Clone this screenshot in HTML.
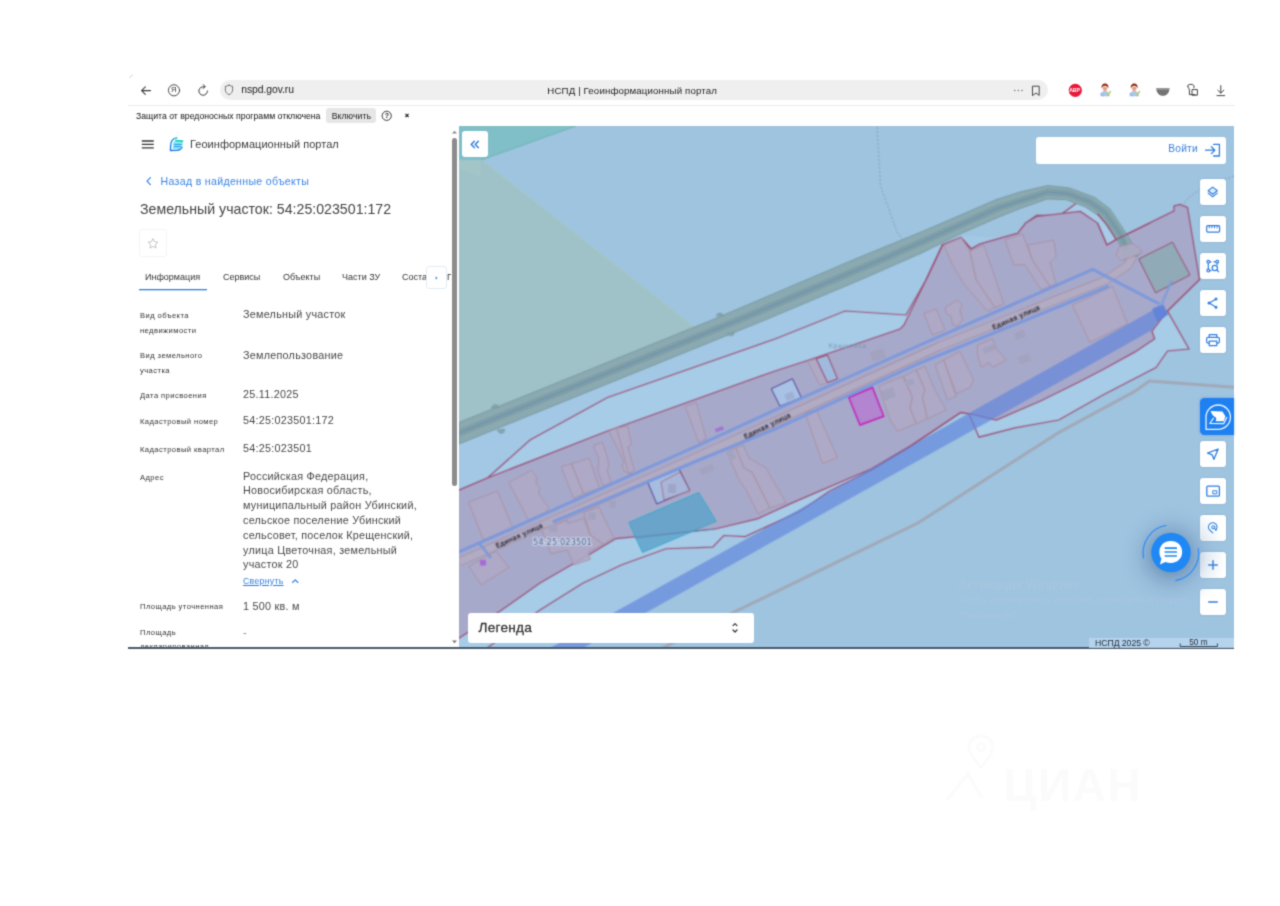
<!DOCTYPE html>
<html lang="ru">
<head>
<meta charset="utf-8">
<title>НСПД | Геоинформационный портал</title>
<style>
*{box-sizing:border-box;margin:0;padding:0}
html,body{width:1280px;height:906px;background:#fff;overflow:hidden}
body{position:relative;font-family:"Liberation Sans",sans-serif;color:#444;filter:url(#soft)}
.a{position:absolute;white-space:nowrap}
.t{position:absolute;white-space:nowrap;line-height:1}
/* browser chrome */
#url{left:220px;top:80px;width:828px;height:20px;background:#efefef;border-radius:10px}
#sep{left:128px;top:105px;width:1107px;height:1px;background:#ececec}
#incl{left:326px;top:108px;width:50px;height:15px;background:#e6e6e6;border-radius:3px}
/* left panel */
#sb{left:452px;top:138px;width:5px;height:348px;background:#8c8c8c;border-radius:3px}
.lab{font-size:7.6px;color:#333;left:140px;letter-spacing:0.43px}
.val{font-size:10.8px;color:#484848;left:243px;letter-spacing:0.25px}
.tab{font-size:9px;color:#333;top:273px}
/* map */
#map{left:459px;top:126px;width:775px;height:522px;background:#9fc4e0;overflow:hidden}
#botline{left:128px;top:647.4px;width:1106px;height:1.5px;background:#4a5a6a}
.btn{width:26px;height:26px;left:1200px;background:#fff;border-radius:3px;box-shadow:0 0 2px rgba(60,90,130,.25)}
.btn svg{position:absolute;left:0;top:0}
</style>
</head>
<body>
<svg width="0" height="0" style="position:absolute"><defs>
<filter id="soft" x="0" y="0" width="100%" height="100%" color-interpolation-filters="sRGB"><feConvolveMatrix order="3" kernelMatrix="0.030 0.110 0.030 0.110 0.440 0.110 0.030 0.110 0.030" edgeMode="duplicate" preserveAlpha="false"/></filter>
<filter id="soft2" x="0" y="0" width="100%" height="100%" color-interpolation-filters="sRGB"><feConvolveMatrix order="3" kernelMatrix="0.050 0.125 0.050 0.125 0.300 0.125 0.050 0.125 0.050" edgeMode="duplicate" preserveAlpha="false"/></filter>
</defs></svg>
<!-- ===== browser toolbar ===== -->
<div class="a" id="url"></div>
<div class="a" id="sep"></div>
<svg class="a" style="left:128px;top:70px" width="1107" height="36" viewBox="128 70 1107 36" fill="none" stroke="#3a3a3a" stroke-width="1.1" stroke-linecap="round" stroke-linejoin="round">
  <path d="M129.500 77.300l3-2.300" stroke="#c4c4c4" stroke-width="0.800"/>
  <!-- back -->
  <path d="M141.700 90.600h8.800M145.300 86.900l-3.700 3.700 3.700 3.700"/>
  <!-- Ya circle -->
  <circle cx="174" cy="90.3" r="5.6" stroke-width="0.9"/>
  <!-- reload -->
  <path d="M207.500 91a4.300 4.300 0 1 1-3.200-4.200" stroke-width="1"/>
  <path d="M203.300 84.600l2.100 2.100-2.300 1.600" stroke-width="1"/>
  <!-- shield -->
  <path d="M229 85.2c1.2.7 2.4 1 3.6 1.1v3.6c0 2.300-1.6 3.900-3.600 4.800-2-.9-3.600-2.500-3.600-4.800v-3.600c1.200-.1 2.400-.4 3.600-1.100z" stroke="#666" stroke-width="0.9"/>
  <!-- dots -->
  <g fill="#777" stroke="none"><circle cx="1014.800" cy="90.500" r="0.800"/><circle cx="1018.400" cy="90.500" r="0.800"/><circle cx="1022" cy="90.500" r="0.800"/></g>
  <!-- bookmark -->
  <path d="M1032.800 86.200h6.400v9.200l-3.200-2.400-3.200 2.400z" stroke="#444" stroke-width="1"/>
  <!-- ABP -->
  <circle cx="1075.300" cy="90.400" r="6.600" fill="#e8193c" stroke="none"/>
  <!-- avatars -->
  <g stroke="none">
    <path d="M1100.200 96.200c.300-3.600 2-5.200 4.800-5.200s4.500 1.600 4.800 5.200z" fill="#a9c6ea"/><path d="M1106.500 96l3.600-5.400 1.100.800-3.200 4.800z" fill="#c2c45a"/><path d="M1100.800 93.500l2.400 2.600" stroke="#7aa0d8" stroke-width="0.800"/>
    <circle cx="1105" cy="88.800" r="2.200" fill="#e3a27e"/><path d="M1101.700 88.400c-.600-3.200 1.200-5 3.300-5s4 1.800 3.300 5c-.800-1.800-1.800-2.600-3.300-2.600s-2.500.800-3.300 2.600z" fill="#9a2c1c"/>
    <path d="M1129.400 96.200c.300-3.600 2-5.200 4.800-5.200s4.500 1.600 4.800 5.200z" fill="#a9c6ea"/><path d="M1135.700 96l3.600-5.400 1.100.800-3.200 4.800z" fill="#c2c45a"/><path d="M1130 93.500l2.400 2.600" stroke="#7aa0d8" stroke-width="0.800"/>
    <circle cx="1134.200" cy="88.800" r="2.200" fill="#e3a27e"/><path d="M1130.900 88.400c-.600-3.200 1.200-5 3.300-5s4 1.800 3.300 5c-.800-1.800-1.800-2.600-3.300-2.600s-2.500.800-3.300 2.600z" fill="#9a2c1c"/>
    <!-- grey bowl -->
    <path d="M1156.400 88.200h13c0 4.600-2.800 7.600-6.500 7.600s-6.500-3-6.500-7.600z" fill="#737373"/><rect x="1156.400" y="88.200" width="13" height="1.600" fill="#9a9a9a"/>
  </g>
  <!-- extension icon -->
  <path d="M1187.800 86.200c0-1.200 1-1.800 2.200-1.800h2.600l1.400 1.600v1.800M1187.800 86.200c0 1.800 1.600 2 1.600 3.800v4.600h5.600M1192.400 89.600h5v5.600h-5z" stroke="#444" stroke-width="1"/>
  <!-- download -->
  <path d="M1220.800 85.600v7.200M1217.800 90.200l3 3 3-3M1217 95.600h7.600" stroke="#444" stroke-width="1"/>
</svg>
<div class="t" style="left:170.900px;top:86.400px;font-size:7.500px;color:#333">Я</div>
<div class="t" style="left:1069.200px;top:87.800px;font-size:5.200px;color:#fff;font-weight:bold;letter-spacing:-0.150px">ABP</div>
<div class="t" style="left:241.300px;top:85.400px;font-size:10.400px;color:#222;letter-spacing:-0.080px">nspd.gov.ru</div>
<div class="t" style="left:547.300px;top:85.500px;font-size:9.700px;color:#222;letter-spacing:0.130px">НСПД | Геоинформационный портал</div>
<!-- infobar -->
<div class="a" id="incl"></div>
<div class="t" style="left:136px;top:111.900px;font-size:8.700px;color:#111;letter-spacing:0">Защита от вредоносных программ отключена</div>
<div class="t" style="left:331.700px;top:111.900px;font-size:8.700px;color:#222;letter-spacing:0.050px">Включить</div>
<svg class="a" style="left:380px;top:109px" width="34" height="14" viewBox="380 109 34 14" fill="none" stroke="#222" stroke-width="0.900"><circle cx="386.700" cy="115.800" r="4.600"/><path d="M405.400 113.800l3.200 3.200M408.600 113.800l-3.200 3.200" stroke-width="1.100"/></svg>
<div class="t" style="left:384.800px;top:112.400px;font-size:7px;color:#222;font-weight:bold">?</div>

<!-- ===== left panel ===== -->
<svg class="a" style="left:128px;top:126px" width="331" height="170" viewBox="128 126 331 170" fill="none">
  <!-- burger -->
  <path d="M141.800 141h12M141.800 144.400h12M141.800 147.800h12" stroke="#333" stroke-width="1.350"/>
  <!-- logo -->
  <defs><linearGradient id="lg" x1="0.600" y1="0" x2="0.300" y2="1"><stop offset="0" stop-color="#30c8c8"/><stop offset="0.450" stop-color="#2a8ae8"/><stop offset="1" stop-color="#2a74e0"/></linearGradient></defs>
  <path d="M175.600 139.700l7.400.600-.500 5.700-4.500 3.300h-5.300l.300-6.300z" fill="#7eeef4"/>
  <path d="M175.300 140.400l7.900.900" stroke="#1ec8b8" stroke-width="1.500"/>
  <path d="M174.200 144.400h7.700M174 146.600h7" stroke="#2a8ae8" stroke-width="0.900"/>
  <path d="M177 137.700C172.300 138.400 170.600 142 170.600 146L170.500 150.500L176.800 150.400C179.800 150 181.400 148.600 182.100 147.200" stroke="url(#lg)" stroke-width="1.400" stroke-linecap="round" stroke-linejoin="round"/>
  <!-- back chevron -->
  <path d="M150.400 177.600l-3.400 3.500 3.400 3.500" stroke="#3b86e6" stroke-width="1.300" stroke-linecap="round" stroke-linejoin="round"/>
  <!-- star button -->
  <rect x="139.500" y="229.500" width="27" height="27" rx="2.500" fill="#fff" stroke="#f4f4f4" stroke-width="1"/>
  <path d="M153 238.600l1.500 3.100 3.400.5-2.500 2.400.6 3.400-3-1.600-3 1.600.6-3.400-2.500-2.400 3.400-.5z" stroke="#b5b5b5" stroke-width="0.800" stroke-linejoin="round"/>
  <!-- tab underline -->
  <rect x="139" y="289" width="68" height="1.300" fill="#2f7fe0"/>
  <!-- tab scroll button -->
  <rect x="426.500" y="266.500" width="20" height="22" rx="2.500" fill="#fff" stroke="#e4ecf8" stroke-width="1"/>
  <path d="M435.700 276.300l1.800 1.700-1.800 1.700z" fill="#2f7fe0"/>
  <!-- scrollbar arrows -->
  <path d="M452 133.500h5l-2.500-2.700z" fill="#8a8a8a"/>
</svg>
<div class="a" id="sb"></div>
<svg class="a" style="left:450px;top:638px" width="9" height="8" viewBox="0 0 9 8"><path d="M2 2.500h5l-2.500 2.700z" fill="#777"/></svg>
<div class="t" style="left:190px;top:139.300px;font-size:11px;color:#3c3c3c;letter-spacing:0.040px">Геоинформационный портал</div>
<div class="t" style="left:160.600px;top:176px;font-size:10.600px;color:#3b86e6;letter-spacing:0.300px">Назад в найденные объекты</div>
<div class="t" style="left:140px;top:201.600px;font-size:14.600px;color:#444;letter-spacing:0;transform:scaleX(0.971);transform-origin:0 0">Земельный участок: 54:25:023501:172</div>
<div class="t tab" style="left:145px">Информация</div>
<div class="t tab" style="left:223px">Сервисы</div>
<div class="t tab" style="left:283px">Объекты</div>
<div class="t tab" style="left:342px">Части ЗУ</div>
<div class="t tab" style="left:402px;width:24px;overflow:hidden">Соста</div>
<div class="t tab" style="left:447px;width:4px;overflow:hidden">Г</div>

<div class="t lab" style="top:311.500px">Вид объекта</div>
<div class="t lab" style="top:326.800px">недвижимости</div>
<div class="t val" style="top:309px">Земельный участок</div>
<div class="t lab" style="top:351.800px">Вид земельного</div>
<div class="t lab" style="top:367px">участка</div>
<div class="t val" style="top:349.500px">Землепользование</div>
<div class="t lab" style="top:391.800px">Дата присвоения</div>
<div class="t val" style="top:389px">25.11.2025</div>
<div class="t lab" style="top:417.500px">Кадастровый номер</div>
<div class="t val" style="top:415px">54:25:023501:172</div>
<div class="t lab" style="top:445.500px">Кадастровый квартал</div>
<div class="t val" style="top:443px">54:25:023501</div>
<div class="t lab" style="top:473.500px">Адрес</div>
<div class="t val" style="top:468.700px;line-height:14.800px;white-space:normal;width:190px">Российская Федерация,<br>Новосибирская область,<br>муниципальный район Убинский,<br>сельское поселение Убинский<br>сельсовет, поселок Крещенский,<br>улица Цветочная, земельный<br>участок 20</div>
<div class="t" style="left:243px;top:577px;font-size:8.800px;color:#2f7fe0;text-decoration:underline;letter-spacing:0.250px">Свернуть</div>
<svg class="a" style="left:290px;top:577px" width="10" height="8" viewBox="0 0 10 8" fill="none"><path d="M2.500 5.500l2.700-2.700 2.700 2.700" stroke="#2f7fe0" stroke-width="1.100" stroke-linecap="round" stroke-linejoin="round"/></svg>
<div class="t lab" style="top:603px">Площадь уточненная</div>
<div class="t val" style="top:601px">1 500 кв. м</div>
<div class="t lab" style="top:628.500px">Площадь</div>
<div class="t val" style="top:626.500px;color:#888">-</div>
<div class="t lab" style="top:643.200px;height:4.300px;overflow:hidden">декларированная</div>

<!-- ===== map ===== -->
<div class="a" id="map">
<!--MAPSVG--><svg class="a" style="left:0;top:0;filter:url(#soft)" width="775" height="522" viewBox="459 126 775 522">
  <rect id="mapbg" x="459" y="126" width="775" height="522" fill="#9fc4e0"/>
  <!-- green area + teal triangle -->
  <polygon points="459,160 483,161 700,331 459,436" fill="#9fc2c8"/>
  <polygon points="459,126 576,126 481,160 481,177 459,169" fill="#a2c5c8"/>
  <polygon points="459,126 576,126 481,160 459,160" fill="#80bfc8"/>
  <path d="M576 126L481 160" stroke="#62b0a8" stroke-width="0.8" fill="none"/>
  <path d="M483 161L692 326" stroke="#a8cab8" stroke-width="0.8" fill="none"/>
  <!-- faint dotted lines -->
  <path d="M877 127L880.500 186L897 232L917 259" stroke="#7a98b4" stroke-width="0.900" stroke-dasharray="2 2" fill="none"/>
  <path d="M1234 176L1205 186L1188 198L1180 210" stroke="#7a98b4" stroke-width="0.900" stroke-dasharray="2 2" fill="none"/>
  <!-- lighter zone between road and blue band -->
  <polygon points="459,444 765,320 920,253.750 962,236 1117,240 1167,311 1152,330 1080,370.500 800,526.400 647.700,611.700 583,648 459,648" fill="#a3c8e5"/>
  <!-- outer zone (light fill, red outline) -->
  <path d="M452 493L487.500 478L530 440L607.500 397.500L775 339L845 311L906 315L926 280L942.500 245L961 237.500L971 249L980 244L1017.800 233.300L1025.600 223.100L1036.600 215.300L1060 215.300L1078 202L1085 205.200L1097.500 213.750L1106.900 224.700L1116.250 239.500L1174 211L1199.500 279.500L1167.500 311L1189 349L1167.500 351L1156 367.500L1103 395L1058.750 420L1015 427.800L979 437.200L969 413.800L960.700 412.400L909.700 446.900L871 470.300L829.700 491L800 511.200L745.200 536.600L723.800 535.500L712.700 547.100L666 548.750L621.250 565L582.700 583.300L540 610L487.800 647.500L470 660L452 660Z" fill="#a7cce8" stroke="#9a4a70" stroke-width="1.200"/>
  <!-- purple quarter -->
  <path d="M452 493L487.500 478L607.500 431L775 371L807.500 360.500L900 329L904 325L926 280L942.500 245L961 237.500L971 249L980 244L1017.800 233.300L1025.600 223.100L1036.600 216.500L1080.300 211.400L1097.500 223.100L1106.900 245L1116.250 239.500L1174 211L1174 206L1180 204.500L1187.500 207.500L1199.500 279.500L1167.500 311L1152 331.250L1154.700 338.750L1135 351.900L1103 369.500L1080 381.500L1040 401.250L996.250 420L970 413.750L960.700 412.400L911 445.500L871 469L791 503.400L758 518.600L715 529L616 538.600L591 553.400L540 583L498.750 612L459.700 637.800L452 643Z" fill="#a7a9ca" stroke="#9a4a70" stroke-width="1.200"/>
  <!-- grey-green road band -->
  <path d="M459 422.500L712 320L860 257L920 232.500L960 215.300L996 199.700L1020 192L1047.500 185.600L1069.400 188L1094.400 197.300L1110 209L1125.600 232.500L1132 243.400L1133 248L1141 251L1138 256L1124 260L1119.400 243.400L1116.250 238.750L1100.600 216.900L1085 206.700L1066.250 199.700L1047.500 198.900L1020 208.500L999 216.900L960 234L920 253.750L860 280L765 320L459 444Z" fill="#8ba9b0" stroke="#74969e" stroke-width="0.9"/>
  <path d="M459 433L738.500 320L890 256L998 208L1047.500 192L1068 193.600L1090 202L1105.500 213L1121 235.600L1127 250" stroke="#7d9fa7" stroke-width="7" fill="none" stroke-linejoin="round"/>
  <path d="M459 433L738.500 320L890 256L998 208L1047.500 192L1068 193.600L1090 202L1105.500 213L1121 235.600L1127 250" stroke="#6b86b8" stroke-width="0.8" fill="none"/>
  <!-- bumps on road band -->
  <path d="M491 408l3-3.500 3.500.500 1.500 2.500zM497 430l3 3.500 4-1 .500-3.500zM716 316l2.500-3 3.500.500 1.500 2zM727 333.500l3 2.500 3.500-1 .500-2.500z" fill="#86a6ad" stroke="#6f929b" stroke-width="0.6"/>
  <path id="qout" d="M926 280L942.500 245L961 237.500L971 249M1097.500 213.750L1106.900 224.700L1116.250 239.500L1150 223M1097.500 223.100L1106.900 245L1116.250 239.500" fill="none" stroke="#9a4a70" stroke-width="1.200"/>
  <!-- street -->
  <path d="M459 562L550 522L699 456L775 421.500L940 346L1105 280.600L1127.500 265.600L1133 256" stroke="#a58a9c" stroke-width="8.600" fill="none" stroke-linejoin="round"/>
  <path d="M459 562L550 522L699 456L775 421.500L940 346L1105 280.600L1127.500 265.600L1133 256" stroke="#b1abc3" stroke-width="7.400" fill="none" stroke-linejoin="round"/>
  <g fill="#afa9c6" fill-opacity="0.85" stroke="#a88c9e" stroke-opacity="0.8" stroke-width="1" stroke-linejoin="round">
    <polygon points="468.400,502.200 497.400,491 513.400,529.400 483.400,539.700"/>
    <polygon points="508.700,482.500 531.200,470.300 536.800,476.900 535.900,482.500 539.600,488.100 538.700,493.750 549,507.800 545.250,512.500 528.400,520"/>
    <polygon points="561.200,466.600 571.500,463.750 583.700,493.750 573.400,498.400"/>
    <polygon points="571.500,463.750 589.300,458.100 599.600,488.100 583.700,493.750"/>
    <polygon points="594,445 602.400,442.200 607.100,456.250 609,465.600 607.100,469.400 610.900,482.500 603.400,486.250 597.750,471.250 598.700,458.100 594,448.750"/>
    <polygon points="609,431 616.500,428.100 631.500,474 624,471.250 622,465.600 624,461.900"/>
    <polygon points="616.500,428.100 627.750,426.250 631.500,445 627.750,446.900 634.300,470.300 628.700,474"/>
    <polygon points="685,406.250 696.250,402.500 706.250,438.750 698.750,442.500"/>
    <polygon points="583.700,512.500 598.700,506.900 613.700,537.800 603.400,544.400 590.250,535"/>
    <polygon points="541.500,529.400 567.750,520 567.750,523.750 583.700,518.100 590.250,535 603.400,544.400 588.400,551.900 590.250,559.400 573.400,565 567.750,550 550.900,553.750"/>
    <polygon points="468.750,566.250 496.250,551.250 508.750,567.500 481.250,585"/>
    <!-- south of street middle: tall stepped buildings -->
    <polygon points="727,452 736,448 744,468 752,472 770,508 758,514 746,490 738,478"/>
    <polygon points="736,448 743,445 749,458 766,468 786,503 770,508 752,472 744,468"/>
    <polygon points="805,412.500 816.250,410 837.500,457.500 822.500,463.750"/>
    <!-- north of street near magenta -->
    <polygon points="807.500,361.250 816.250,358.750 827.500,382.500 820,385"/>
    <polygon points="878.750,386.250 902.500,376.250 912.500,397.500 910,407.500 916.250,423.750 897.500,431.250 890,420"/>
    <polygon points="903.750,376.250 916.250,370 925,390 922.500,397.500 927.500,418.750 916.250,423.750 910,407.500 912.500,397.500"/>
    <polygon points="916.250,370 925,366.250 935,390 946.250,410 927.500,418.750 922.500,397.500 925,390"/>
    <polygon points="935,365 943.750,360 956.250,396.250 947.500,400"/>
    <polygon points="943.750,360 960,351.250 973.750,380 970,387.500 956.250,393.750"/>
    <polygon points="977.500,345 992.500,338.750 996.250,348.750 1006.250,360 992.500,367.500 988.750,362.500 981.250,367.500 977.500,355"/>
    <polygon points="923.750,313.750 936.250,308.750 945,330 932.500,335"/>
    <polygon points="945,307.500 957.500,300 962.500,305 960,310 962.500,320 957.500,326.250 952.500,325 951.250,316.250 946.250,313.750"/>
    <polygon points="943.750,245 961.250,237.500 970,251.250 976.250,280 995,307.500 987.500,311.250 963.750,283.750 952.500,265"/>
    <polygon points="970,251.250 983.750,245 995,277.500 1003.750,303.750 995,307.500 976.250,280"/>
    <polygon points="1005,240 1022.500,233.750 1032.500,260 1050,286.250 1041.250,290 1025,265 1013.750,265"/>
    <polygon points="1027.500,245 1053.750,240 1056.250,256.250 1050,262.500 1056.250,283.750 1050,286.250 1032.500,260"/>
    <polygon points="1072.500,305 1112.500,286.250 1127.500,323.750 1090,342.500"/>
    <polygon points="1116.250,255.200 1117.800,251.250 1119.400,246.600 1131.900,243.400 1141.250,249.700 1142,252.800 1130.300,257.500 1121,260.600"/>
</g>
<!-- small grey footprints -->
<g fill="#a3a3c0" stroke="none">
    <rect x="609" y="501" width="7" height="7"/><rect x="588.400" y="512.500" width="7.500" height="7.500"/><rect x="549" y="524.700" width="8.400" height="7.500"/>
    <rect x="871" y="350" width="14" height="10" transform="rotate(-20 878 355)"/><rect x="882.500" y="388.750" width="12.500" height="10" transform="rotate(-20 889 394)"/>
    <rect x="1015" y="331" width="10" height="7.500" transform="rotate(-20 1020 335)"/><rect x="1020" y="336" width="0" height="0"/>
    <rect x="700" y="466" width="14" height="7" transform="rotate(-22 707 470)"/><rect x="728" y="452" width="7" height="8" transform="rotate(-22 731 456)"/>
    <rect x="1018.500" y="355" width="12" height="8" transform="rotate(-20 1024 359)"/><rect x="905" y="380" width="9" height="6" transform="rotate(-22 909 383)"/>
    <rect x="983" y="346" width="12" height="6" transform="rotate(-22 989 349)"/>
</g>
<!-- green-grey square -->
<polygon points="1138.750,259 1172.500,242.200 1190,275 1155.600,292.800" fill="#91aab8" stroke="#9a4060" stroke-width="0.9"/>
<!-- dark-outlined blue parcels -->
<polygon points="647.400,481.600 679.300,469.400 689.600,490 656.800,504" fill="#a6bfe2" fill-opacity="0.9" stroke="#4d3a8c" stroke-width="1"/>
<polygon points="661,482 680,472 690,491 664,500" fill="#a9b3d6" fill-opacity="0.7" stroke="#a2556c" stroke-width="0.7"/>
<rect x="668" y="484" width="8" height="9" fill="#9ea6c6"/>
<polygon points="771.250,388.750 792.500,378.750 801.250,397.500 780,406.250" fill="#a8c2e6" stroke="#4d3a8c" stroke-width="1"/>
<rect x="785" y="393" width="9" height="7" fill="#9fb0d2" transform="rotate(-22 789 396)"/>
<polygon points="816.250,358.750 827.500,355 837.500,378.750 827.500,382.500" fill="#9ebbde" stroke="#9a3055" stroke-width="0.9"/>
<!-- cyan rect -->
<polygon points="628.750,522.500 698.750,492.500 716.250,521.250 642.500,552.500" fill="#5fa3cb" fill-opacity="0.85" stroke="#2fa8c8" stroke-width="0.9"/>
<path d="M635 538L715 529" stroke="#5585a8" stroke-width="0.8" fill="none"/>
<!-- magenta parcel -->
<polygon points="848.750,397.500 872.500,387.500 883.750,416.250 860,425" fill="#b384cf" stroke="#c41ab8" stroke-width="1.400"/>
<!-- small purple markers -->
<rect x="715" y="427.500" width="8.500" height="3.800" fill="#a274d4" transform="rotate(-20 719 429)"/>
<rect x="480" y="560" width="6" height="5.500" fill="#a868d8"/>

  <!-- blue lines along street -->
  <path d="M459 552L699 445L775 410L920 345L1092.800 269.400L1159.400 304" stroke="#7b98dc" stroke-width="3" fill="none" stroke-linejoin="miter"/>
  <path d="M552.750 522L699 460L775 429L920 363L1108.750 286.250" stroke="#7b98dc" stroke-width="3" fill="none"/>
  <path d="M479.500 543.500L491 558" stroke="#7b98dc" stroke-width="2.600" fill="none"/>
  <!-- blue diagonal band -->
  <polygon points="550,648 615.200,611.700 800,509 987,403 1155,309 1163,304 1168,314.400 1157.500,322 1152,330 1080,370.500 800,526.400 647.700,611.700 583,648" fill="#6285da" fill-opacity="0.68"/>
  <polygon points="1152,308.750 1163,304 1168,314.400 1157.500,322" fill="#5c7fd8" fill-opacity="0.8"/>
  <path d="M1161 306L1171.600 280.600" stroke="#7d9bdc" stroke-width="2.600" stroke-opacity="0.850" fill="none"/>
  <!-- grey road line -->
  <path d="M1234 387.200L1149.400 381L1133.750 391.900L1058.750 432.500L1015 460.600L918 523L840 560.600L800 580.200L735 611.700L672 643.200L662 648.500" stroke="#a0a8b6" stroke-width="3" fill="none"/>
  <!-- labels -->
  <g font-family="'DejaVu Sans','Liberation Sans',sans-serif" font-size="6.500" fill="#1c1c28" stroke="#1c1c28" stroke-width="0.200" text-anchor="middle" letter-spacing="0.300">
    <text transform="translate(520.200 537.600) rotate(-24.600)">Единая улица</text>
    <text transform="translate(768.300 427.800) rotate(-25.600)">Единая улица</text>
    <text transform="translate(1017 319.400) rotate(-23.800)">Единая улица</text>
  </g>
  <text x="847.800" y="347.600" font-family="'DejaVu Sans','Liberation Sans',sans-serif" font-size="6.400" fill="#7596b6" text-anchor="middle" letter-spacing="0.500">Крещенка</text>
  <text x="562.500" y="544.500" font-family="'DejaVu Sans','Liberation Sans',sans-serif" font-size="8.200" fill="#434d78" text-anchor="middle" stroke="#cfdbf0" stroke-width="2.200" paint-order="stroke" stroke-linejoin="round" letter-spacing="0.100">54:25:023501</text>
</svg>
<!--/MAPSVG-->
</div>
<div class="a" id="botline"></div>
<!--CONTROLS--><!-- collapse button -->
<div class="a" style="left:462px;top:131px;width:26px;height:26px;background:#fff;border-radius:3px"></div>
<svg class="a" style="left:462px;top:131px" width="26" height="26" viewBox="0 0 26 26" fill="none" stroke="#2f7fe0" stroke-width="1.500" stroke-linecap="round" stroke-linejoin="round"><path d="M12.300 10.200L9.200 13.400l3.100 3.200M16.300 10.200l-3.100 3.200 3.100 3.200"/></svg>
<!-- login box -->
<div class="a" style="left:1036px;top:136.500px;width:190px;height:27px;background:#fff;border-radius:3px"></div>
<div class="t" style="left:1168.300px;top:144.300px;font-size:10.300px;color:#3b7fe0;letter-spacing:0.150px">Войти</div>
<svg class="a" style="left:1202px;top:141px" width="22" height="18" viewBox="1202 141 22 18" fill="none" stroke="#2f7fe0" stroke-width="1.300" stroke-linecap="round" stroke-linejoin="round"><path d="M1205.500 150.200h9M1211.400 146.800l3.400 3.400-3.400 3.400M1213.600 144.400h5.800v11.600h-5.800"/></svg>
<!-- right buttons -->
<div class="a btn" style="top:179px"><svg width="26" height="26" viewBox="0 0 26 26" fill="none" stroke="#2f7fe0" stroke-width="1.100" stroke-linejoin="round" stroke-linecap="round"><path d="M12.700 8.100l4.600 3.600-4.600 3.600-4.600-3.600z" fill="#dff0ff"/><path d="M8.100 14.100l4.600 3.600 4.600-3.600"/></svg></div>
<div class="a btn" style="top:216px"><svg width="26" height="26" viewBox="0 0 26 26" fill="none" stroke="#2f7fe0" stroke-width="1.200" stroke-linejoin="round"><rect x="6.700" y="9.700" width="12.900" height="6.400" rx="1"/><path d="M9.300 9.800v2.500M11.900 9.800v2.500M14.500 9.800v2.500M17.100 9.800v2.500" stroke-width="1"/></svg></div>
<div class="a btn" style="top:253px"><svg width="26" height="26" viewBox="0 0 26 26" fill="none" stroke="#2f7fe0" stroke-width="1.200"><circle cx="8.300" cy="8.800" r="1.400"/><circle cx="17.200" cy="8.800" r="1.400"/><circle cx="8.300" cy="17.600" r="1.400"/><path d="M8.300 10.200v6M9.700 8.800h1.800M13.500 8.800h2.300M17.200 10.200v1.800M9.700 17.600h1.800"/><circle cx="14.800" cy="15" r="2.700"/><path d="M16.800 17l2.200 2.200"/></svg></div>
<div class="a btn" style="top:290px"><svg width="26" height="26" viewBox="0 0 26 26" fill="none" stroke="#2f7fe0" stroke-width="1.200"><path d="M15.800 9.200l-6.600 3.900 6.600 3.900"/><circle cx="16" cy="9" r="0.900" fill="#2f7fe0"/><circle cx="9" cy="13.100" r="0.900" fill="#2f7fe0"/><circle cx="16" cy="17.200" r="0.900" fill="#2f7fe0"/></svg></div>
<div class="a btn" style="top:327px"><svg width="26" height="26" viewBox="0 0 26 26" fill="none" stroke="#2f7fe0" stroke-width="1.200" stroke-linejoin="round"><path d="M9.200 10.400V7.600h7.600v2.800"/><rect x="6.600" y="10.400" width="12.800" height="5.800" rx="1.600"/><rect x="9.200" y="14.200" width="7.600" height="4.400" fill="#fff"/></svg></div>
<!-- blue active button -->
<div class="a" style="left:1200px;top:398.300px;width:34px;height:37px;background:#1f80f2;border-radius:4.500px 0 0 4.500px;box-shadow:0 0 3px rgba(30,100,200,.35)"></div>
<svg class="a" style="left:1200px;top:398px" width="34" height="38" viewBox="0 0 34 38" fill="none" stroke="#e8f6ff" stroke-width="1.300" stroke-linejoin="round"><path d="M18.200 7A12.200 12.200 0 1 1 18.200 31.400L6 31.400L6 19.200A12.200 12.200 0 0 1 18.200 7Z"/><path d="M10.500 13L22.400 13.500L25.400 18.300L23.900 23.200L15.800 23.200L16.300 19.900L12.750 17.300Z" fill="#fff" stroke="none"/><path d="M13.600 19.900L9.900 25.500L23.700 25.700L27 19.100" stroke-width="1.200"/></svg>
<div class="a btn" style="top:440.800px"><svg width="26" height="26" viewBox="0 0 26 26" fill="none" stroke="#2f7fe0" stroke-width="1.300" stroke-linejoin="round"><path d="M18.200 8L7.600 12.200l4.600 1.600 1.600 4.600z"/></svg></div>
<div class="a btn" style="top:477.700px"><svg width="26" height="26" viewBox="0 0 26 26" fill="none" stroke="#2f7fe0" stroke-width="1.300" stroke-linejoin="round"><rect x="6.800" y="8.200" width="12.600" height="10" rx="1.200"/><rect x="12.800" y="12.800" width="4" height="3" stroke-width="1"/></svg></div>
<div class="a btn" style="top:514.800px"><svg width="26" height="26" viewBox="0 0 26 26" fill="none" stroke="#2f7fe0" stroke-width="1.100" stroke-linecap="round"><path d="M15.600 15.200a4.300 4.300 0 1 0-5.400.300l2.600 2.400"/><circle cx="13.300" cy="12.200" r="1.500"/><path d="M14.500 13.400l1.700 1.700"/></svg></div>
<div class="a btn" style="top:552.100px"><svg width="26" height="26" viewBox="0 0 26 26" fill="none" stroke="#2f7fe0" stroke-width="1.500"><path d="M8.200 13h9.600M13 8.200v9.600"/></svg></div>
<div class="a btn" style="top:589px"><svg width="26" height="26" viewBox="0 0 26 26" fill="none" stroke="#2f7fe0" stroke-width="1.500"><path d="M8.200 13h9.600"/></svg></div>
<!-- chat button -->
<svg class="a" style="left:1111px;top:493px" width="120" height="120" viewBox="1111 493 120 120" fill="none">
  <defs><radialGradient id="cg" cx="0.500" cy="0.500" r="0.500"><stop offset="0.300" stop-color="#5a7fa8" stop-opacity="0.600"/><stop offset="0.650" stop-color="#7fa3c6" stop-opacity="0.220"/><stop offset="1" stop-color="#9fc4e1" stop-opacity="0"/></radialGradient></defs>
  <circle cx="1171" cy="555.500" r="56" fill="url(#cg)"/>
  <path d="M1143.500 558a28 28 0 0 1 22.500-32.600" stroke="#3a92f5" stroke-width="1.400" stroke-linecap="round"/>
  <path d="M1198.300 548.500a28 28 0 0 1-22.500 32" stroke="#3a92f5" stroke-width="1.400" stroke-linecap="round"/>
  <circle cx="1171" cy="552.500" r="19.800" fill="#1f88f5"/>
  <g transform="translate(1170.800 552.600) scale(1.160) translate(-1170.600 -552.500)">
  <path d="M1170.600 542.600c5.800 0 9.800 3.900 9.800 9.400s-4 9.400-9.800 9.400c-1.700 0-3.300-.300-4.600-.900l-4.800 2.300 1.300-4.900c-1.100-1.600-1.700-3.600-1.700-5.900 0-5.500 4-9.400 9.800-9.400z" fill="#fff"/>
  <path d="M1165.300 548.600h10.600M1165.300 552h10.600M1165.300 555.400h10.600" stroke="#1f88f5" stroke-width="1.400"/>
  </g>
</svg>
<!-- windows activation watermark -->
<div class="t" style="left:958.500px;top:578.500px;font-size:12.900px;color:#aac6de;letter-spacing:0.100px">Активация Windows</div>
<div class="t" style="left:958.500px;top:595.300px;font-size:9.700px;color:#a7c6e1">Чтобы активировать Windows, перейдите в раздел</div>
<div class="t" style="left:958.500px;top:609.500px;font-size:9.700px;color:#a7c6e1">"Параметры".</div>
<!-- legend -->
<div class="a" style="left:468px;top:613px;width:286px;height:30px;background:#fff;border-radius:3px"></div>
<div class="t" style="left:478.500px;top:621px;font-size:13.600px;color:#333;-webkit-text-stroke:0.300px #333;letter-spacing:0.250px">Легенда</div>
<svg class="a" style="left:728px;top:619px" width="14" height="18" viewBox="0 0 14 18" fill="none" stroke="#333" stroke-width="1.200" stroke-linecap="round" stroke-linejoin="round"><path d="M5 6.600l2-2 2 2M5 11l2 2 2-2"/></svg>
<!-- attribution -->
<div class="a" style="left:1089px;top:637.500px;width:145px;height:10px;background:#b8d6ef;opacity:.85"></div>
<div class="t" style="left:1095px;top:638.600px;font-size:8.700px;color:#25303c;letter-spacing:-0.050px">НСПД 2025 ©</div>
<div class="t" style="left:1189.200px;top:638.200px;font-size:8.300px;color:#25303c">50 m</div>
<svg class="a" style="left:1178px;top:640px" width="42" height="8" viewBox="1178 640 42 8" fill="none" stroke="#2a3a4a" stroke-width="0.900"><path d="M1180.200 643.500v3h37.200v-3"/></svg>
<!--/CONTROLS-->
<!-- faint watermark -->
<div class="t" style="left:1003px;top:762px;font-size:46px;font-weight:bold;color:#fbfbfb;letter-spacing:1.500px">ЦИАН</div>
<svg class="a" style="left:944px;top:734px" width="56" height="70" viewBox="0 0 56 70" fill="none" stroke="#fbfbfb" stroke-width="3"><path d="M37 2c7 0 12 5 12 11.500 0 7-12 20-12 20s-12-13-12-20c0-6.500 5-11.500 12-11.500z"/><circle cx="37" cy="13" r="3.500"/><path d="M3 66l21-26 14 24"/></svg>
</body>
</html>
